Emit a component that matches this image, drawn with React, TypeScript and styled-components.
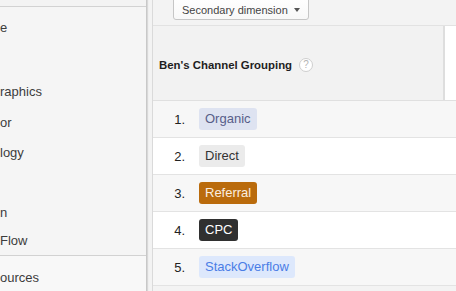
import React from "react";
import styled, { createGlobalStyle } from "styled-components";

const GlobalStyle = createGlobalStyle`
  html, body {
    margin: 0;
    padding: 0;
  }
  body {
    font-family: "Liberation Sans", Arial, sans-serif;
    background: #f3f3f3;
  }
`;

const Page = styled.div`
  display: flex;
  width: 456px;
  height: 291px;
  overflow: hidden;
  background: #f3f3f3;
`;

const Sidebar = styled.nav`
  flex: 0 0 146px;
  display: flex;
  flex-direction: column;
  padding-top: 6px;
  background: #f3f3f3;
  border-right: 1px solid #c8c8c8;
  box-shadow: 1px 0 1px #d8d8d8;
`;

interface GroupProps {
  $grow?: boolean;
  $bg: string;
}

const SideGroup = styled.ul<GroupProps>`
  list-style: none;
  margin: 0;
  padding: 4px 0 2px;
  border-top: 1px solid #d2d2d2;
  background: ${p => p.$bg};
  flex: ${p => (p.$grow ? "1 0 auto" : "0 0 auto")};
`;

const SideItem = styled.li<{ $h: number }>`
  display: flex;
  align-items: center;
  justify-content: flex-start;
  height: ${p => p.$h}px;
  padding: 0;
  font-size: 13px;
  color: #3c3c3c;
  white-space: nowrap;
  overflow: hidden;
`;

const Main = styled.main`
  flex: 1;
  min-width: 0;
  margin-left: 5px;
  display: flex;
  flex-direction: column;
  border-left: 1px solid #dadada;
`;

const Toolbar = styled.div`
  height: 25px;
  display: flex;
  align-items: flex-start;
  padding-left: 20px;
  border-bottom: 1px solid #e2e2e2;
  background: #f3f3f3;
`;

const DimensionButton = styled.div`
  box-sizing: border-box;
  width: 136px;
  height: 24px;
  margin-top: -4px;
  padding: 3px 8px 0 8px;
  display: flex;
  align-items: center;
  font-size: 11px;
  color: #444;
  background: linear-gradient(#ffffff, #f8f8f8);
  border: 1px solid #c6c6c6;
  border-radius: 0 0 3px 3px;
`;

const ButtonLabel = styled.span`
  flex: 1;
`;

const Caret = styled.span`
  width: 0;
  height: 0;
  border-left: 3.5px solid transparent;
  border-right: 3.5px solid transparent;
  border-top: 4px solid #555;
`;

const HeaderRow = styled.div`
  display: flex;
  height: 74px;
  border-bottom: 1px solid #e0e0e0;
`;

const HeaderCell = styled.div`
  width: 292px;
  display: flex;
  align-items: center;
  padding: 3px 0 0 6px;
  box-sizing: border-box;
  background: #f2f2f2;
  border-right: 2px solid #dedede;
  font-size: 11.4px;
  font-weight: bold;
  color: #1e1e1e;
`;

const HeaderTail = styled.div`
  flex: 1;
  background: #ffffff;
`;

const HelpIcon = styled.span`
  box-sizing: border-box;
  width: 14px;
  height: 14px;
  margin-left: 7px;
  border-radius: 50%;
  border: 1px solid #cfcfcf;
  background: #fff;
  display: flex;
  align-items: center;
  justify-content: center;
  font-size: 10px;
  font-weight: normal;
  color: #b5b5b5;
`;

const Row = styled.div<{ $alt: boolean }>`
  display: flex;
  align-items: center;
  height: 36px;
  flex-shrink: 0;
  border-bottom: 1px solid #e3e3e3;
  background: ${p => (p.$alt ? "#f7f7f7" : "#ffffff")};
`;

const RowNum = styled.span`
  width: 32px;
  text-align: right;
  font-size: 13px;
  color: #222;
`;

interface ChipProps {
  $bg: string;
  $fg: string;
}

const Chip = styled.span<ChipProps>`
  margin-left: 14px;
  height: 22px;
  line-height: 22px;
  padding: 0 6px;
  border-radius: 3px;
  font-size: 13px;
  background: ${p => p.$bg};
  color: ${p => p.$fg};
`;

const navTop = [
  { text: "e", h: 32 },
  { text: "", h: 32 },
  { text: "raphics", h: 32 },
  { text: "or", h: 30 },
  { text: "logy", h: 30 },
  { text: "", h: 30 },
  { text: "n", h: 30 },
  { text: "Flow", h: 26 },
];

const channels = [
  { name: "Organic", bg: "#dee3f1", fg: "#585e89" },
  { name: "Direct", bg: "#ebebeb", fg: "#333333" },
  { name: "Referral", bg: "#ba6b0c", fg: "#fbeee0" },
  { name: "CPC", bg: "#303030", fg: "#ffffff" },
  { name: "StackOverflow", bg: "#dde8fc", fg: "#4a7de6" },
];

export default function App() {
  return (
    <>
      <GlobalStyle />
      <Page>
        <Sidebar>
          <SideGroup $bg="#f5f5f5">
            {navTop.map((item, i) => (
              <SideItem key={i} $h={item.h}>{item.text}</SideItem>
            ))}
          </SideGroup>
          <SideGroup $bg="#f8f8f8" $grow>
            <SideItem $h={34}>ources</SideItem>
          </SideGroup>
        </Sidebar>
        <Main>
          <Toolbar>
            <DimensionButton>
              <ButtonLabel>Secondary dimension</ButtonLabel>
              <Caret />
            </DimensionButton>
          </Toolbar>
          <HeaderRow>
            <HeaderCell>
              Ben's Channel Grouping
              <HelpIcon>?</HelpIcon>
            </HeaderCell>
            <HeaderTail />
          </HeaderRow>
          {channels.map((c, i) => (
            <Row key={c.name} $alt={i % 2 === 0}>
              <RowNum>{i + 1}.</RowNum>
              <Chip $bg={c.bg} $fg={c.fg}>{c.name}</Chip>
            </Row>
          ))}
        </Main>
      </Page>
    </>
  );
}
